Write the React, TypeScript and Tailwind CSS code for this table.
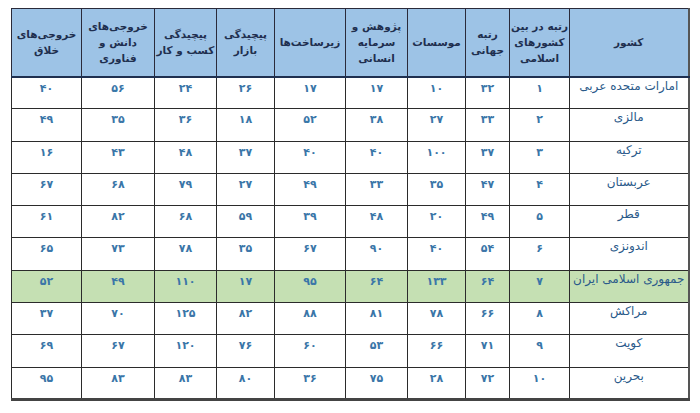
import React from 'react';

const headers: React.ReactNode[] = [
  'کشور',
  <>رتبه در بین<br />کشورهای<br />اسلامی</>,
  <>رتبه<br />جهانی</>,
  'موسسات',
  <>پژوهش و<br />سرمایه<br />انسانی</>,
  'زیرساخت‌ها',
  <>پیچیدگی<br />بازار</>,
  <>پیچیدگی<br />کسب و کار</>,
  <>خروجی‌های<br />دانش و<br />فناوری</>,
  <>خروجی‌های<br />خلاق</>,
];

const widths = ['w-[119px]', 'w-[60px]', 'w-[44px]', 'w-[58px]', 'w-[62px]', 'w-[71px]', 'w-[58px]', 'w-[62px]', 'w-[73px]', 'w-[70px]'];

const rows: [string, ...number[]][] = [
  ['امارات متحده عربی', 1, 32, 10, 17, 17, 26, 24, 56, 40],
  ['مالزی', 2, 33, 27, 38, 52, 18, 36, 35, 49],
  ['ترکیه', 3, 37, 100, 40, 40, 37, 48, 43, 16],
  ['عربستان', 4, 47, 35, 33, 49, 27, 79, 68, 67],
  ['قطر', 5, 49, 20, 48, 39, 59, 68, 82, 61],
  ['اندونزی', 6, 54, 40, 90, 67, 35, 78, 73, 65],
  ['جمهوری اسلامی ایران', 7, 64, 133, 64, 95, 17, 110, 49, 52],
  ['مراکش', 8, 66, 78, 81, 88, 82, 125, 70, 37],
  ['کویت', 9, 71, 66, 53, 60, 76, 120, 67, 69],
  ['بحرین', 10, 72, 28, 75, 36, 80, 83, 83, 95],
];

const fa = (n: number) => n.toString().replace(/\d/g, (d) => '۰۱۲۳۴۵۶۷۸۹'[+d]);

export default function App() {
  return (
    <div className="w-[700px] h-[413px] bg-white pt-[8px] pl-[11px]" style={{ fontFamily: '"DejaVu Sans", sans-serif' }}>
      <table dir="rtl" className="w-[678px] table-fixed border-collapse border-r-2 border-b-[3px] border-l border-t border-r-[#555] border-b-[#444] border-l-[#333] border-t-[#333]">
        <colgroup>
          {widths.map((w, i) => (
            <col key={i} className={w} />
          ))}
        </colgroup>
        <thead>
          <tr className="h-[68px] bg-[#9dc3e6]">
            {headers.map((h, i) => (
              <th
                key={i}
                className="border border-[#2a2a3a] border-b-2 border-b-[#1f3050] text-center align-middle whitespace-nowrap text-[10.5px] leading-[16px] font-bold text-[#1f2f4f] px-0"
              >
                {h}
              </th>
            ))}
          </tr>
        </thead>
        <tbody>
          {rows.map((r, i) => (
            <tr key={i} className={`h-[32.3px] ${i === 6 ? 'bg-[#c5e0b3]' : 'bg-white'}`}>
              {r.map((c, j) => (
                <td
                  key={j}
                  className={`border border-[#2b2b2b] text-center align-top text-[11px] ${
                    j === 0
                      ? 'text-[12px] leading-[14px] pt-[1px] text-[#2a5a8a] font-normal'
                      : 'pt-[3px] leading-[16px] font-bold text-[#3a76a8]'
                  }`}
                >
                  {typeof c === 'number' ? fa(c) : c}
                </td>
              ))}
            </tr>
          ))}
        </tbody>
      </table>
    </div>
  );
}
